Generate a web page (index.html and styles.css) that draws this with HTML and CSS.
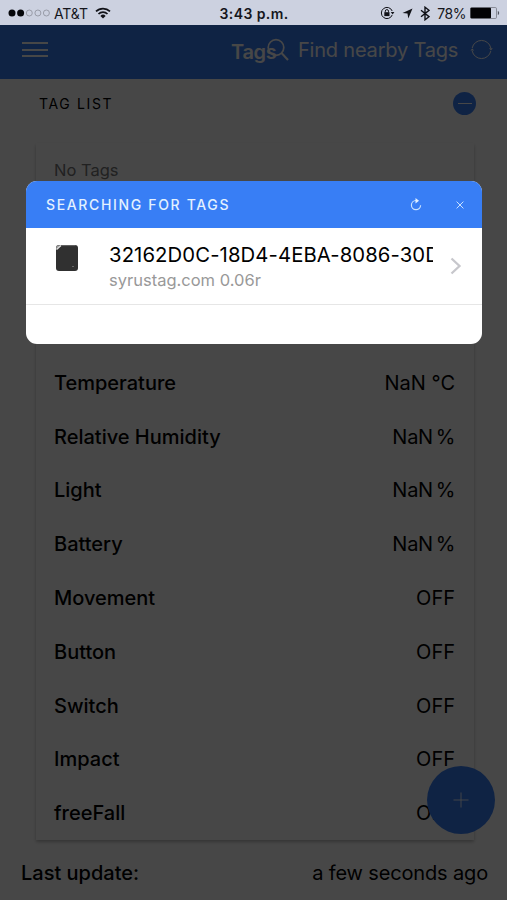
FILE: index.html
```html
<!DOCTYPE html>
<html lang="en">
<head>
    <meta charset="UTF-8">
    <meta name="viewport" content="width=device-width, initial-scale=1.0">
    <title>Tags</title>
    <link rel="stylesheet" href="styles.css">
</head>
<body>
    <div class="status-bar">
        <div class="status-left">
            <svg class="signal" width="43" height="8" viewBox="0 0 43 8">
                <circle cx="4" cy="4" r="3.5" fill="#05060a"/>
                <circle cx="12.6" cy="4" r="3.5" fill="#05060a"/>
                <circle cx="21.3" cy="4" r="3" fill="none" stroke="#8b8e99" stroke-width=".8"/>
                <circle cx="29.9" cy="4" r="3" fill="none" stroke="#8b8e99" stroke-width=".8"/>
                <circle cx="38.4" cy="4" r="3" fill="none" stroke="#8b8e99" stroke-width=".8"/>
            </svg>
            <span class="carrier">AT&amp;T</span>
            <svg class="wifi" width="16" height="12" viewBox="0 0 16 12" fill="none" stroke="#111218" stroke-width="1.7">
                <path d="M1 4.4a10 10 0 0 1 14 0M3.5 7a6.4 6.4 0 0 1 9 0"/>
                <path d="M8 11.4L5.4 8.9a3.7 3.7 0 0 1 5.2 0z" fill="#111218" stroke="none"/>
            </svg>
        </div>
        <div class="clock">3:43 p.m.</div>
        <div class="status-right">
            <svg width="15" height="14" viewBox="0 0 15 14" fill="none" stroke="#111218">
                <path d="M12.2 5A5.6 5.6 0 1 0 12.2 9"/>
                <path d="M10.8 6h3.6l-1.8 2.6z" fill="#111218" stroke="none"/>
                <path d="M5.3 6.4V5.2a1.6 1.6 0 0 1 3.2 0v1.2"/>
                <path d="M4.3 6.2h5.2v3.9H4.3z" fill="#111218" stroke="none"/>
            </svg>
            <svg class="location" width="11" height="11" viewBox="0 0 11 11">
                <path d="M10.5.5L6.3 10.5 5.5 5.6.5 5z" fill="#111218"/>
            </svg>
            <svg class="bluetooth" width="10" height="15" viewBox="0 0 10 15" fill="none" stroke="#111218" stroke-width="1.4">
                <path d="M1 4.2l8 6.5-4 3.1V1.2l4 3.1-8 6.5"/>
            </svg>
            <span class="percent">78%</span>
            <svg class="battery" width="30" height="12" viewBox="0 0 30 12">
                <rect x=".5" y=".5" width="26" height="11" rx="1.2" fill="none" stroke="#777a84" stroke-width=".8"/>
                <rect x=".5" y=".8" width="20.5" height="10.4" rx=".8" fill="#020204"/>
                <path d="M27.8 4c1.8.5 1.8 3.5 0 4z" fill="#555862"/>
            </svg>
        </div>
    </div>

    <div class="app">
        <div class="nav-bar">
            <div class="menu-icon"><i></i><i></i><i></i></div>
            <div class="nav-title">Tags</div>
            <div class="nav-find">
                <svg width="24" height="24" viewBox="0 0 24 24" fill="none" stroke="#fff" stroke-width="1.7">
                    <circle cx="9" cy="9.5" r="7.8"/>
                    <path d="M14.5 15l6.5 7" stroke-width="2"/>
                </svg>
                <span>Find nearby Tags</span>
                <svg class="sync" width="24" height="24" viewBox="0 0 24 24" fill="none" stroke="#fff" stroke-width="1">
                    <path d="M2.2 10A9.5 9.5 0 0 1 20.8 10M20.8 13A9.5 9.5 0 0 1 2.2 13"/>
                    <path d="M19 10.2h3.8L20.9 12.4zM.4 12.6h3.8L2.3 10.4z" fill="#fff" stroke="none"/>
                </svg>
            </div>
        </div>

        <div class="list-header">
            <span>TAG LIST</span>
            <div class="minus-button"></div>
        </div>

        <div class="card">
            <div class="empty">No Tags</div>
            <div class="row"><b>Temperature</b><span>NaN °C</span></div>
            <div class="row"><b>Relative Humidity</b><span class="percentage">NaN %</span></div>
            <div class="row"><b>Light</b><span class="percentage">NaN %</span></div>
            <div class="row"><b>Battery</b><span class="percentage">NaN %</span></div>
            <div class="row"><b>Movement</b><span>OFF</span></div>
            <div class="row"><b>Button</b><span>OFF</span></div>
            <div class="row"><b>Switch</b><span>OFF</span></div>
            <div class="row"><b>Impact</b><span>OFF</span></div>
            <div class="row"><b>freeFall</b><span>OFF</span></div>
        </div>

        <div class="last-update"><b>Last update:</b><span>a few seconds ago</span></div>

        <div class="fab">
            <svg width="16" height="16" viewBox="0 0 16 16" stroke="#fff" stroke-width=".9">
                <path d="M8 .5v15M.5 8h15"/>
            </svg>
        </div>
    </div>

    <div class="backdrop"></div>

    <div class="modal">
        <div class="modal-header">
            <span class="modal-title">SEARCHING FOR TAGS</span>
            <svg class="refresh" width="12" height="13" viewBox="0 0 12 13" fill="none" stroke="#c9e2ff" stroke-width="1.2">
                <path d="M6 2.5a4.6 4.6 0 1 0 4.6 4.8"/>
                <path d="M5.5 0L9 2.8 5.5 5.5z" fill="#e3f1ff" stroke="none"/>
            </svg>
            <svg class="close" width="8" height="8" viewBox="0 0 8 8" stroke="#c9e2ff" stroke-width="1">
                <path d="M.6.6l6.8 6.8M7.4.6L.6 7.4"/>
            </svg>
        </div>
        <div class="tag-item">
            <svg class="tag-image" width="24" height="28" viewBox="0 0 24 28">
                <rect x="1" y="1" width="22" height="26" rx="3" fill="#303030"/>
                <path d="M1.2 5.8V3.5A2.5 2.5 0 0 1 3.7 1.2H6z" fill="#999"/>
                <path d="M1.6 5.5L6 1.5" stroke="#e4e4e4" stroke-width="1.2"/>
                <path d="M6 1.6h14.5" stroke="#666" stroke-width="1"/>
                <circle cx="18" cy="22.5" r=".6" fill="#aaa"/>
            </svg>
            <div class="tag-text">
                <div class="tag-id">32162D0C-18D4-4EBA-8086-30D</div>
                <div class="tag-info">syrustag.com 0.06r</div>
            </div>
            <svg class="chevron" width="12" height="18" viewBox="0 0 12 18" fill="none" stroke="#c7c7cc" stroke-width="2.3">
                <path d="M1.5 1.5L9.5 9l-8 7.5"/>
            </svg>
        </div>
    </div>
</body>
</html>
```

FILE: styles.css
```css
* {
    box-sizing: border-box;
}
body {
    margin: 0;
    height: 900px;
    overflow: hidden;
    position: relative;
    font-family: Inter, "Liberation Sans", sans-serif;
    background-color: #fff;
    color: #000;
}
svg {
    display: block;
    flex: none;
}
.status-bar {
    height: 25px;
    background-color: #ccd1e0;
    color: #15161c;
    display: grid;
    grid-template-columns: 1fr auto 1fr;
    align-items: center;
    padding: 1px 7px 0 8px;
    font-size: 14px;
}
.status-left,
.status-right {
    display: flex;
    align-items: center;
}
.status-right {
    justify-content: flex-end;
}
.carrier {
    margin-left: 3px;
    letter-spacing: -0.1px;
}
.wifi {
    margin-left: 7px;
}
.clock {
    font-weight: 600;
    font-size: 14px;
    letter-spacing: 0.4px;
}
.location {
    margin-left: 7px;
}
.bluetooth {
    margin: 0 7px;
}
.percent {
    letter-spacing: -0.5px;
}
.battery {
    margin-left: 4px;
}
.app {
    height: 875px;
}
.nav-bar {
    height: 54px;
    background-color: #387ef5;
    color: #fff;
    display: flex;
    align-items: center;
    padding: 0 13px 5px 22px;
}
.menu-icon {
    width: 26px;
    display: flex;
    flex-direction: column;
    gap: 4.5px;
}
.menu-icon i {
    height: 2px;
    background-color: #fff;
}
.nav-title {
    margin-left: 183px;
    margin-top: 5px;
    width: 36px;
    white-space: nowrap;
    font-size: 20px;
    font-weight: 600;
    letter-spacing: -0.3px;
}
.nav-find {
    display: flex;
    align-items: center;
    font-size: 20px;
}
.nav-find span {
    margin-left: 7px;
    width: 160px;
    white-space: nowrap;
    letter-spacing: -0.2px;
}
.sync {
    margin-left: 12px;
}
.list-header {
    height: 64px;
    display: flex;
    justify-content: space-between;
    align-items: flex-start;
    padding: 13px 31px 0 39px;
    font-size: 14px;
    line-height: 24px;
    letter-spacing: 1.65px;
}
.minus-button {
    width: 23px;
    height: 23px;
    border-radius: 50%;
    background-color: #387ef5;
    display: flex;
    align-items: center;
    justify-content: center;
}
.minus-button::before {
    content: "";
    width: 14px;
    height: 1px;
    background-color: #fff;
}
.card {
    margin: 0 33px 0 36px;
    height: 697px;
    padding: 0 19px 0 18px;
    box-shadow: 0 2px 3px rgba(0, 0, 0, 0.25);
}
.empty {
    height: 213px;
    padding-top: 17px;
    font-size: 16.5px;
    color: #777;
}
.row {
    height: 53.8px;
    display: flex;
    justify-content: space-between;
    align-items: center;
    font-size: 20px;
}
.percentage {
    letter-spacing: -0.3px;
    word-spacing: -2.5px;
}
b {
    font-weight: 500;
}
.last-update {
    height: 60px;
    display: flex;
    justify-content: space-between;
    align-items: center;
    padding: 6px 19px 0 21px;
    font-size: 20px;
}
.last-update span {
    letter-spacing: -0.15px;
}
.fab {
    position: absolute;
    left: 427px;
    top: 766px;
    width: 68px;
    height: 68px;
    border-radius: 50%;
    background-color: #387ef5;
    display: flex;
    align-items: center;
    justify-content: center;
}
.backdrop {
    position: absolute;
    top: 25px;
    right: 0;
    bottom: 0;
    left: 0;
    background-color: rgba(0, 0, 0, 0.72);
}
.modal {
    position: absolute;
    left: 26px;
    top: 181px;
    width: 456px;
    height: 163px;
    border-radius: 11px;
    overflow: hidden;
    background-color: #fff;
}
.modal-header {
    height: 47px;
    background-color: #387ef5;
    color: #e3f1ff;
    display: flex;
    align-items: center;
    padding: 0 18px 0 20px;
}
.modal-title {
    flex: 1;
    font-size: 14px;
    font-weight: 500;
    letter-spacing: 1.65px;
}
.close {
    margin-left: 34px;
}
.tag-item {
    height: 77px;
    display: flex;
    align-items: center;
    padding: 0 20px 0 29px;
    border-bottom: 1px solid #e6e6e6;
}
.tag-image {
    margin-bottom: 17px;
}
.tag-text {
    margin-left: 30px;
    padding-top: 2px;
    width: 324px;
    overflow: hidden;
    white-space: nowrap;
}
.tag-id {
    font-size: 20.3px;
    line-height: 26px;
    letter-spacing: 0.1px;
}
.tag-info {
    font-size: 16.5px;
    line-height: 25px;
    color: #999;
}
.chevron {
    margin-left: auto;
}
```
